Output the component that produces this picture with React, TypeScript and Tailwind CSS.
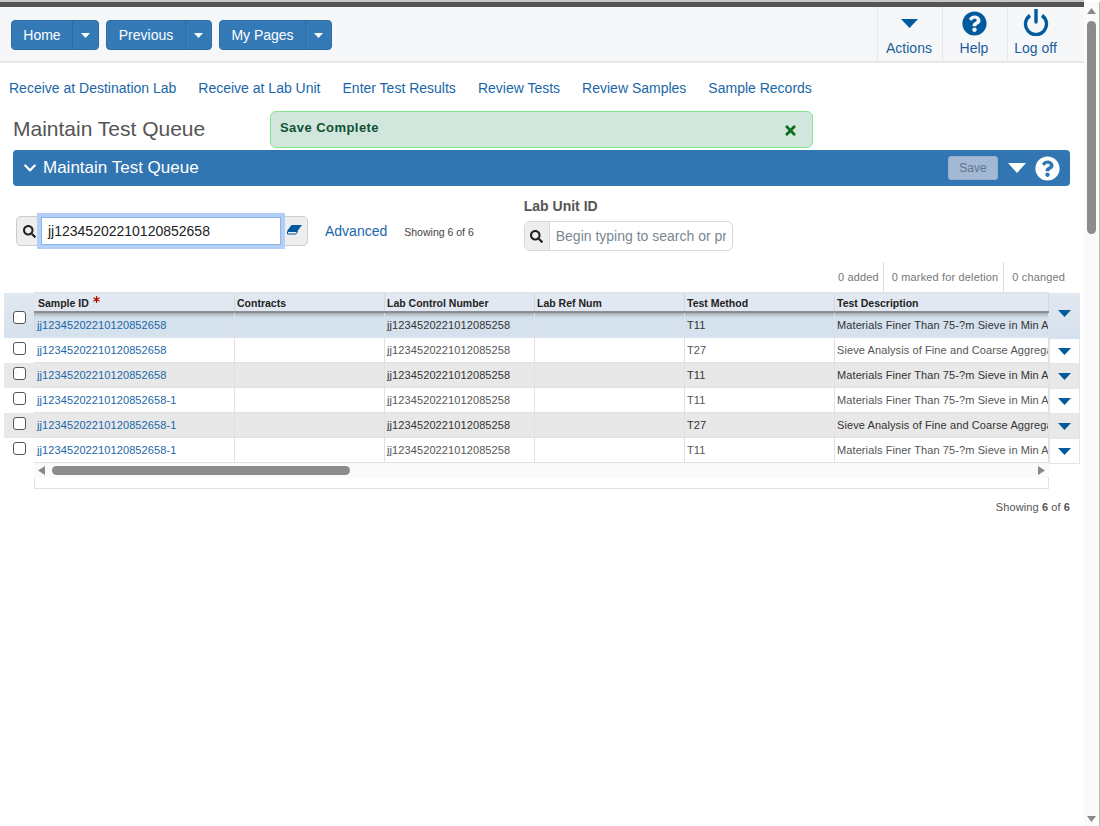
import React from "react";
import { FaSearch, FaQuestionCircle, FaChevronDown, FaTimes, FaAsterisk } from "react-icons/fa";

const Tri = ({ w, h, color, className = "" }: { w: number; h: number; color: string; className?: string }) => (
  <svg width={w} height={h} viewBox="0 0 10 6" preserveAspectRatio="none" className={className} fill={color}>
    <polygon points="0,0 10,0 5,6" />
  </svg>
);

const SplitBtn = ({ label, w }: { label: string; w: number }) => (
  <div className="flex h-[30px] rounded-[4px] bg-[#337ab7] border border-[#2e6da4] text-white text-[14px]">
    <div className="flex items-center justify-center border-r border-[#2e6da4]" style={{ width: w }}>
      {label}
    </div>
    <div className="flex items-center justify-center w-[25px]">
      <Tri w={9} h={5} color="#ffffff" />
    </div>
  </div>
);

const ToolBtn = ({ label, w, icon, last }: { label: string; w: number; icon: React.ReactNode; last?: boolean }) => (
  <div
    className={`flex flex-col items-center h-full pr-[2px] ${last ? "" : "border-r"} border-[#e5e7ea] text-[#1a5e9c] text-[14px]`}
    style={{ width: w }}
  >
    <div className="h-[33px] flex items-center justify-center">{icon}</div>
    <div className="leading-[16px]">{label}</div>
  </div>
);

const cols = [201, 150, 150, 150, 150, 214];
const headers = ["Sample ID", "Contracts", "Lab Control Number", "Lab Ref Num", "Test Method", "Test Description"];
const MAT = "Materials Finer Than 75-?m Sieve in Min Aggregate";
const SIEVE = "Sieve Analysis of Fine and Coarse Aggregates";
const rows = [
  { id: "jj12345202210120852658", m: "T11", d: MAT },
  { id: "jj12345202210120852658", m: "T27", d: SIEVE },
  { id: "jj12345202210120852658", m: "T11", d: MAT },
  { id: "jj12345202210120852658-1", m: "T11", d: MAT },
  { id: "jj12345202210120852658-1", m: "T27", d: SIEVE },
  { id: "jj12345202210120852658-1", m: "T11", d: MAT },
];

const rowBg = (i: number) => (i === 0 ? "bg-[#d5e1ed]" : i % 2 === 1 ? "bg-white" : "bg-[#e8e8e8]");
const rowText = (i: number) => (i % 2 === 1 ? "text-[#555555]" : "text-[#333333]");

const Box = () => <span className="block w-[13px] h-[13px] rounded-[3px] border border-[#555555] bg-white" />;

export default function App() {
  return (
    <div className="relative w-[1100px] h-[826px] overflow-hidden bg-white flex [font-family:Liberation_Sans,Arial,sans-serif]">
      <div className="w-[1084px] shrink-0 flex flex-col">
        <div className="h-[2px] bg-[#c8c8c8]" />
        <div className="h-[5px] bg-[#555555]" />
        {/* toolbar */}
        <div className="h-[56px] bg-[#f6f7f9] border-b-2 border-[#e7e8ea] flex items-stretch justify-between">
          <div className="flex items-center gap-[7px] pl-[11px] pt-[2px]">
            <SplitBtn label="Home" w={61} />
            <SplitBtn label="Previous" w={79} />
            <SplitBtn label="My Pages" w={86} />
          </div>
          <div className="flex items-stretch border-l border-[#e5e7ea] pr-[19px]">
            <ToolBtn label="Actions" w={65} icon={<Tri w={17} h={9} color="#005a9e" className="mb-[1px]" />} />
            <ToolBtn label="Help" w={65} icon={<FaQuestionCircle size={25} color="#005a9e" />} />
            <ToolBtn
              label="Log off"
              w={57}
              last
              icon={
                <svg width="26" height="27" viewBox="0 0 26 27" fill="none" stroke="#005a9e" strokeWidth="3.4" className="mb-[2px]">
                  <path d="M7 6.5 A10.5 10.5 0 1 0 19 6.5" />
                  <path d="M13 0.5 V13" strokeLinecap="round" />
                </svg>
              }
            />
          </div>
        </div>
        {/* nav */}
        <div className="flex gap-[22px] pl-[9px] pt-[17px] text-[14px] leading-[16px] text-[#1a66a8]">
          <span>Receive at Destination Lab</span>
          <span>Receive at Lab Unit</span>
          <span>Enter Test Results</span>
          <span>Review Tests</span>
          <span>Review Samples</span>
          <span>Sample Records</span>
        </div>
        {/* title */}
        <div className="pl-[13px] pt-[21px] text-[21px] leading-[24px] text-[#555555]">Maintain Test Queue</div>
        {/* panel */}
        <div className="ml-[13px] mt-[9px] w-[1057px] h-[36px] rounded-[4px] bg-[#3175b3] flex items-center text-white">
          <FaChevronDown size={14} className="ml-[10px]" />
          <span className="ml-[6px] text-[17px]">Maintain Test Queue</span>
          <div className="ml-auto flex items-center">
            <div className="w-[50px] h-[24px] rounded-[3px] bg-[#a3b9d3] border border-[#98afcb] text-[#5f7590] text-[12px] flex items-center justify-center">
              Save
            </div>
            <Tri w={18} h={10} color="#ffffff" className="ml-[10px]" />
            <FaQuestionCircle size={25} color="#ffffff" className="ml-[9px] mr-[10px]" />
          </div>
        </div>
        {/* search row */}
        <div className="flex items-start h-[80px]">
          <div className="ml-[16px] mt-[30px] w-[292px] h-[30px] rounded-[5px] border border-[#cccccc] bg-[#eeeeee] flex items-stretch">
            <div className="w-[24px] flex items-center justify-center text-[#222222]">
              <FaSearch size={13} />
            </div>
            <div className="relative w-[240px] bg-white border border-[#8ab4ee] outline-[4px] outline-[#b4cff5] text-[14px] text-[#222222] flex items-center pl-[6px]">
              jj12345202210120852658
            </div>
            <div className="flex-1 flex items-center justify-center">
              <svg width="15" height="10" viewBox="0 0 15 10" className="mb-[2px]">
                <polygon points="4.5,0 15,0 10.5,6 0,6" fill="#005a9e" />
                <polygon points="0.5,6.5 10.5,6.5 9,9 0.5,9" fill="none" stroke="#005a9e" strokeWidth="1" />
              </svg>
            </div>
          </div>
          <span className="ml-[17px] mt-[37px] text-[14px] leading-[16px] text-[#1a66a8]">Advanced</span>
          <span className="ml-[17px] mt-[40px] text-[10.5px] leading-[12px] text-[#444444]">Showing 6 of 6</span>
          <div className="ml-[50px] mt-[12px] flex flex-col">
            <span className="text-[14px] leading-[16px] font-bold text-[#555555]">Lab Unit ID</span>
            <div className="mt-[7px] w-[209px] h-[30px] rounded-[6px] border border-[#d8d8d8] flex items-stretch overflow-hidden">
              <div className="w-[25px] bg-[#eeeeee] border-r border-[#d8d8d8] flex items-center justify-center text-[#222222]">
                <FaSearch size={13} />
              </div>
              <div className="flex-1 overflow-hidden whitespace-nowrap flex items-center ml-[6px] mr-[6px] text-[14px] text-[#7a8793]">
                Begin typing to search or press
              </div>
            </div>
          </div>
        </div>
        {/* counters */}
        <div className="h-[30px] flex justify-end text-[11px] tracking-[0.15px] text-[#777777] pr-[19px] mt-[-4px]">
          <span className="flex items-center pr-[4px] border-r border-[#dddddd] h-[30px]">0 added</span>
          <span className="flex items-center pl-[8px] pr-[5px] border-r border-[#dddddd] h-[30px]">0 marked for deletion</span>
          <span className="flex items-center pl-[8px]">0 changed</span>
        </div>
        {/* grid */}
        <div className="flex ml-[4px] w-[1076px] items-start">
          <div className="w-[30px] shrink-0 flex flex-col items-center mt-[1px]">
            <div className="w-full h-[45px] bg-gradient-to-b from-[#e2e8f0] to-[#d5e1ed] flex items-start pt-[18px] justify-center">
              <Box />
            </div>
            {rows.slice(1).map((_, i) => (
              <div key={i} className={`w-full h-[25px] pt-[4px] flex justify-center items-start ${rowBg(i + 1)}`}>
                <Box />
              </div>
            ))}
          </div>
          <div className="w-[1015px] shrink-0 flex flex-col overflow-hidden">
            <div className="flex h-[21px] bg-[#e2e8f1] border-t-2 border-[#e2e3e6] border-b-2 border-b-[#8a8e94]">
              {headers.map((h, i) => (
                <div
                  key={h}
                  style={{ width: cols[i] }}
                  className={`shrink-0 ${i === 0 ? "pl-[4px]" : "pl-[2px]"} border-r border-[#d3d8df] text-[10.5px] font-bold text-[#222222] leading-[18px] whitespace-nowrap flex items-start`}
                >
                  {h}
                  {i === 0 && <FaAsterisk size={7} color="#b80000" className="ml-[4px] mt-[2px]" />}
                </div>
              ))}
            </div>
            {rows.map((r, i) => {
              const vals = [r.id, "", "jj12345202210120 85258".replace(" ", ""), "", r.m, r.d];
              return (
                <div
                  key={i}
                  className={`flex h-[25px] border-b border-[#dfe1e5] ${rowBg(i)} ${rowText(i)} ${i === 0 ? "shadow-[inset_0_4px_4px_-3px_#8a8e94]" : ""}`}
                >
                  {vals.map((v, j) => (
                    <div
                      key={j}
                      style={{ width: cols[j] }}
                      className={`shrink-0 ${j === 0 ? "pl-[3px] text-[#1a66a8]" : "pl-[2px]"} border-r border-[#dfe1e5] text-[11px] tracking-[0.1px] leading-[24px] whitespace-nowrap overflow-hidden`}
                    >
                      {v}
                    </div>
                  ))}
                </div>
              );
            })}
            <div className="relative h-[15px] bg-[#fafafa] flex items-center justify-between px-[4px]">
              <svg width="7" height="9" viewBox="0 0 7 9" fill="#888888"><polygon points="7,0 7,9 0,4.5" /></svg>
              <div className="absolute left-[18px] top-[3px] w-[298px] h-[9px] rounded-[5px] bg-[#8b8b8b]" />
              <svg width="7" height="9" viewBox="0 0 7 9" fill="#888888"><polygon points="0,0 0,9 7,4.5" /></svg>
            </div>
            <div className="h-[11px] border border-t-0 border-[#dfe1e5] border-r-[#dfe1e5]" />
          </div>
          <div className="w-[31px] shrink-0 flex flex-col mt-[1px]">
            <div className="h-[46px] bg-gradient-to-b from-[#e2e8f0] to-[#d5e1ed] flex items-start pt-[17px] justify-center">
              <Tri w={13} h={7} color="#005a9e" />
            </div>
            {rows.slice(1).map((_, i) => (
              <div
                key={i}
                className={`h-[25px] flex items-center justify-center border-l border-b border-r border-[#e3e4e7] ${i % 2 === 0 ? "bg-white" : "bg-[#e8e8e8]"}`}
              >
                <Tri w={13} h={7} color="#005a9e" />
              </div>
            ))}
          </div>
        </div>
        <div className="mt-[11px] pr-[14px] text-right text-[11px] tracking-[0.1px] leading-[14px] text-[#555555]">
          Showing <b>6</b> of <b>6</b>
        </div>
      </div>
      {/* page scrollbar */}
      <div className="flex-1 mt-[2px] bg-[#fafafa] border-r border-[#b8b8b8] flex flex-col items-center pt-[6px] pb-[4px]">
        <svg width="9" height="6" viewBox="0 0 9 6" fill="#8a8a8a"><polygon points="0,6 9,6 4.5,0" /></svg>
        <div className="mt-[7px] w-[9px] h-[213px] rounded-[5px] bg-[#8b8b8b]" />
        <svg width="9" height="6" viewBox="0 0 9 6" fill="#8a8a8a" className="mt-auto"><polygon points="0,0 9,0 4.5,6" /></svg>
      </div>
      {/* toast */}
      <div className="absolute left-[270px] top-[111px] w-[543px] h-[37px] rounded-[6px] bg-[#d1e7dd] border border-[#80e88c] flex items-start justify-between pl-[9px] pr-[14px]">
        <span className="text-[13px] leading-[31px] font-bold tracking-[0.45px] text-[#0f5132]">Save Complete</span>
        <FaTimes size={15} color="#0b6e1f" className="mt-[11px]" />
      </div>
    </div>
  );
}
